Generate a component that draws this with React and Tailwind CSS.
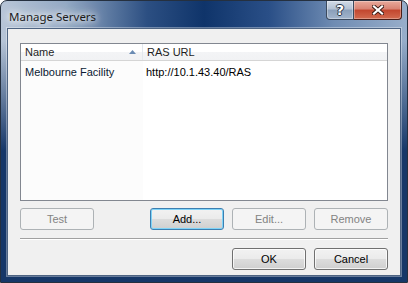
import React from "react";

const font = { fontFamily: '"Liberation Sans", Arial, sans-serif' };

const btn = "h-[22px] w-[74px] rounded-[3px] text-[11px] flex items-center justify-center";
const normal =
  "border border-[#707070] bg-[linear-gradient(to_bottom,#f2f2f2_0%,#ebebeb_48%,#dddddd_50%,#cfcfcf_100%)] shadow-[inset_0_0_0_1px_rgba(255,255,255,0.75)] text-black";
const disabled = "border border-[#adb2b5] bg-[#f4f4f4] text-[#838383]";
const focused =
  "border border-[#3c7fb1] bg-[linear-gradient(to_bottom,#f2f2f2_0%,#ebebeb_48%,#dddddd_50%,#cfcfcf_100%)] shadow-[inset_0_0_0_1px_#7fd3f7] text-black";

const Button = ({ kind = "normal", children }) => (
  <div className={`${btn} ${kind === "disabled" ? disabled : kind === "focused" ? focused : normal}`}>
    {children}
  </div>
);

const ManageServers = () => {
  return (
    <div
      className="w-[408px] h-[283px] flex flex-col border border-[#25303f] rounded-t-[7px] overflow-hidden bg-[linear-gradient(to_bottom,rgba(19,50,100,0)_0px,rgba(19,50,100,0)_40px,#163768_150px),linear-gradient(to_right,#b7c5d7_0%,#93a9c4_16%,#2c4f82_36%,#0f346a_50%,#2a4f87_66%,#6f8cb3_82%,#98aeca_100%)]"
      style={font}
    >
      {/* title bar */}
      <div className="h-[27px] flex items-start justify-between pl-[8px] pr-[5px] shrink-0">
        <div
          className="pt-[7px] text-[#1b1b1b] [text-shadow:0_0_6px_#fff,0_0_10px_#fff,0_0_16px_#fff]"
          style={{ fontFamily: '"Noto Sans", "Open Sans", sans-serif', fontSize: "11.5px" }}
        >
          Manage Servers
        </div>
        <div className="flex">
          <div className="w-[28px] h-[19px] border border-t-0 border-[#3b4a5e] rounded-bl-[4px] bg-[linear-gradient(to_bottom,#d2dbe7_0%,#b3c1d3_45%,#8a9fba_50%,#a2b5cc_100%)] shadow-[inset_0_0_0_1px_rgba(255,255,255,0.35)] flex items-center justify-center">
            <span
              className="text-[14px] font-bold text-white leading-none [text-shadow:0_0_1px_#2a3647,1px_0_0_#2a3647,-1px_0_0_#2a3647,0_1px_0_#2a3647,0_-1px_0_#2a3647]"
              style={{ fontFamily: '"DejaVu Sans", sans-serif' }}
            >
              ?
            </span>
          </div>
          <div className="w-[48px] h-[19px] border border-t-0 border-l-0 border-[#4a1e18] rounded-br-[4px] bg-[linear-gradient(to_bottom,#e8aa9c_0%,#d88272_45%,#c2462e_50%,#d26b50_100%)] shadow-[inset_0_0_0_1px_rgba(255,255,255,0.3)] flex items-center justify-center">
            <svg width="12" height="10" viewBox="0 0 12 10">
              <path d="M2 1.5 L10 8.5 M10 1.5 L2 8.5" stroke="#3a1a14" strokeWidth="4" strokeLinecap="square" />
              <path d="M2 1.5 L10 8.5 M10 1.5 L2 8.5" stroke="#ffffff" strokeWidth="2.2" strokeLinecap="square" />
            </svg>
          </div>
        </div>
      </div>

      {/* client area */}
      <div className="flex-1 mx-[6px] mb-[6px] border border-[#4e6482] shadow-[0_0_0_1px_rgba(255,255,255,0.35)] bg-[#f0f0f0] flex flex-col px-[12px] pt-[14px] pb-[5px] text-[11px]">
        {/* list view */}
        <div className="h-[158px] border border-[#828790] bg-white flex flex-col">
          <div className="h-[17px] flex bg-[linear-gradient(to_bottom,#ffffff_0%,#ffffff_50%,#f3f4f6_51%,#f1f2f4_100%)] border-b border-[#d5d5d5]">
            <div className="w-[122px] border-r border-[#e3e8ee] flex items-center justify-between pl-[4px] pr-[6px] text-[#1e1e1e]">
              <span>Name</span>
              <svg width="7" height="4" viewBox="0 0 7 4">
                <path d="M0 4 L3.5 0 L7 4 Z" fill="#6a8bb3" />
              </svg>
            </div>
            <div className="flex-1 flex items-center pl-[4px] text-[#1e1e1e]">RAS URL</div>
          </div>
          <div className="flex-1 flex">
            <div className="w-[122px] bg-[#fcfcfc] pl-[4px] pt-[3px] text-[#0a1a33]">Melbourne Facility</div>
            <div className="flex-1 pl-[3px] pt-[3px]">http://10.1.43.40/RAS</div>
          </div>
        </div>

        {/* action buttons */}
        <div className="mt-[7px] flex">
          <Button kind="disabled">Test</Button>
          <div className="flex-1" />
          <div className="flex gap-[8px]">
            <Button kind="focused">Add...</Button>
            <Button kind="disabled">Edit...</Button>
            <Button kind="disabled">Remove</Button>
          </div>
        </div>

        <div className="mt-[8px] border-t border-[#a0a0a0] border-b border-b-white" />

        <div className="mt-[8px] flex justify-end gap-[8px]">
          <Button>OK</Button>
          <Button>Cancel</Button>
        </div>
      </div>
    </div>
  );
};

export default function App() {
  return <ManageServers />;
}
